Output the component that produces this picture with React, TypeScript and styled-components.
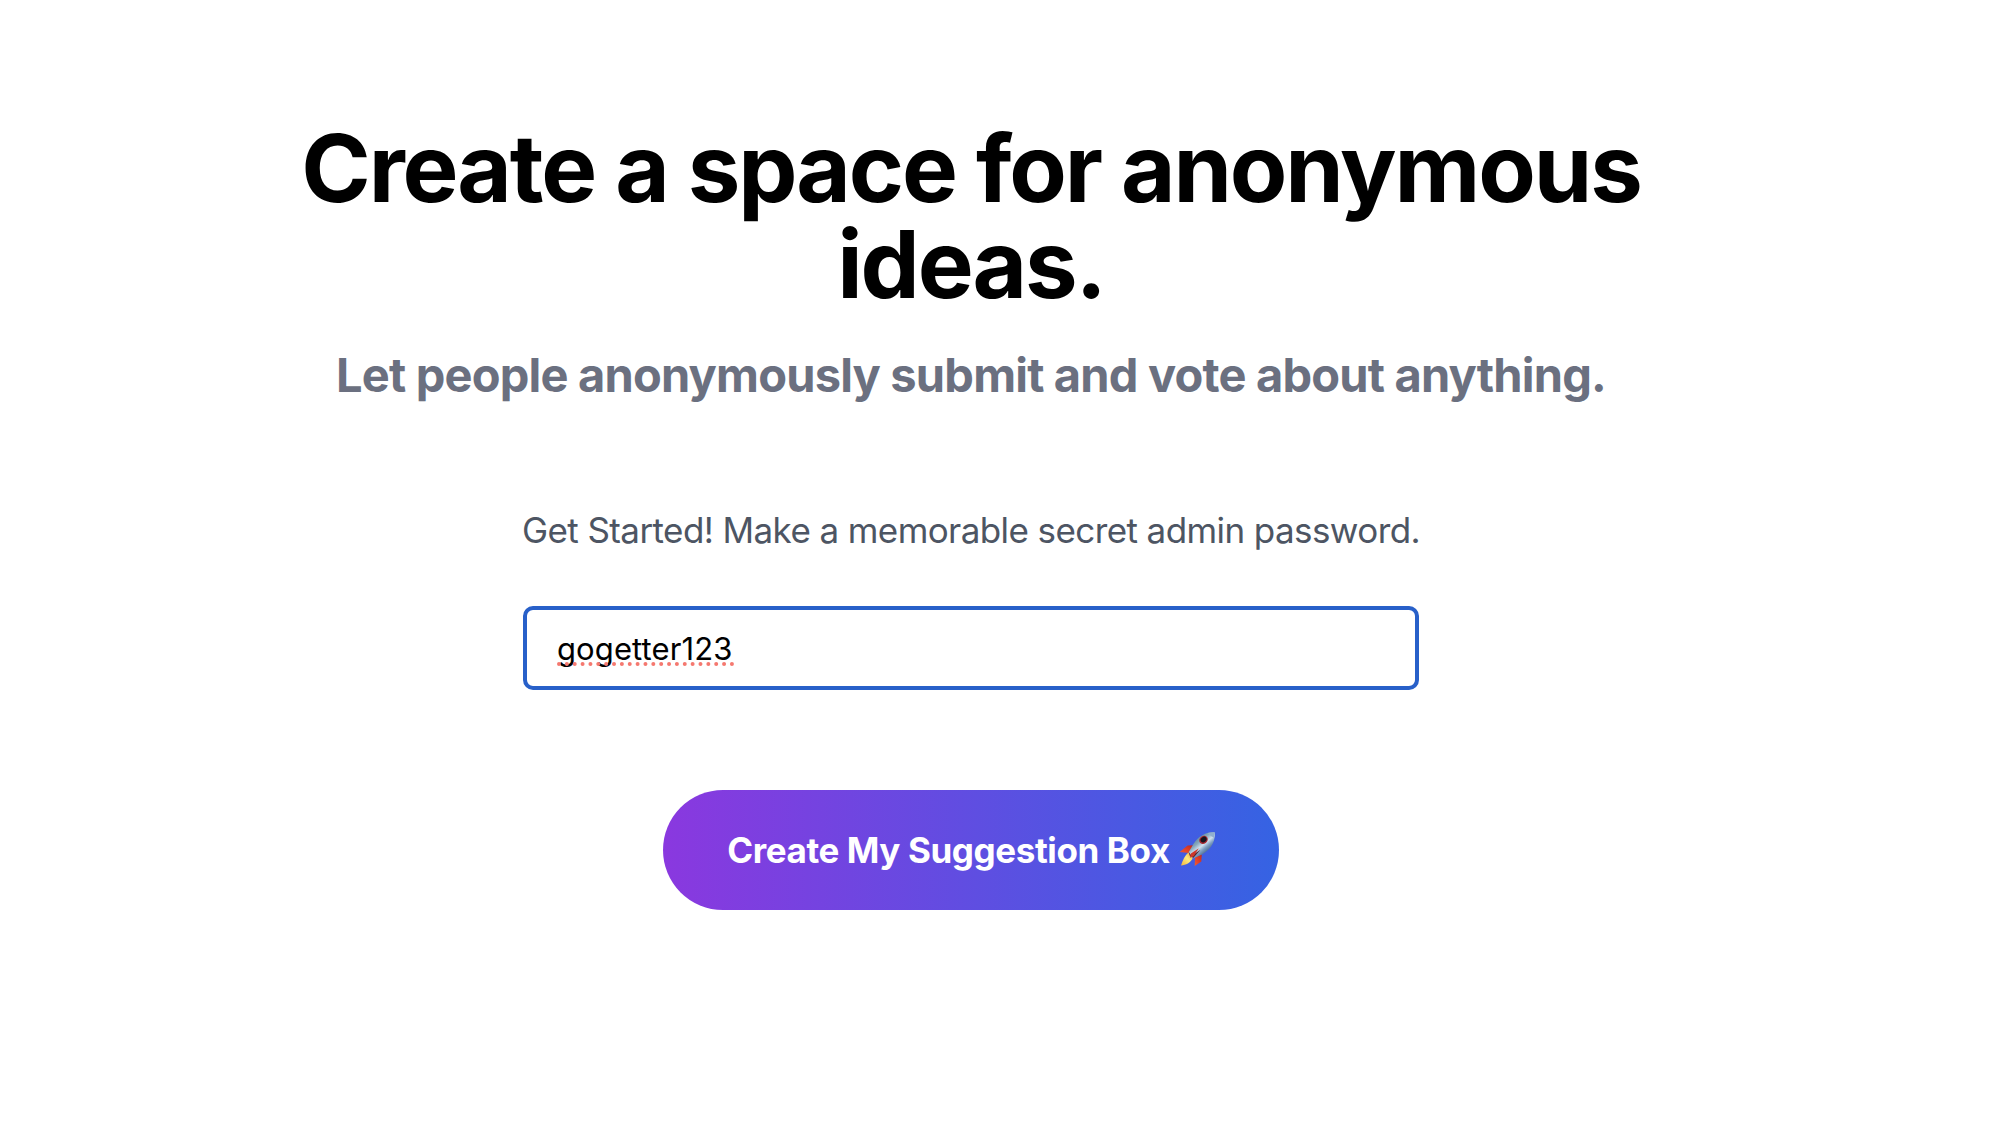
import { useState } from 'react'
import styled, { createGlobalStyle } from 'styled-components'

export default function App() {
	const [password, setPassword] = useState('gogetter123')

	return (
		<>
			<GlobalStyle />
			<PageWrapper>
				<Title>Create a space for anonymous ideas.</Title>
				<Subtitle>
					Let people anonymously submit and vote about anything.
				</Subtitle>

				{/* Password form */}
				<PasswordForm onSubmit={(e) => e.preventDefault()}>
					<PasswordLabel htmlFor="password">
						Get Started! Make a memorable secret admin password.
					</PasswordLabel>
					<InputWrapper>
						<PasswordInput
							id="password"
							spellCheck={false}
							value={password}
							onChange={(e) => setPassword(e.target.value)}
						/>
						<SpellingDots />
					</InputWrapper>
					<CreateButton type="submit">
						<span>Create My Suggestion Box</span>
						<Rocket />
					</CreateButton>
				</PasswordForm>
			</PageWrapper>
		</>
	)
}

function SpellingDots() {
	return (
		<DotsSvg width="178" height="4" viewBox="0 0 178 4" aria-hidden="true">
			<line
				x1="2"
				y1="2"
				x2="176"
				y2="2"
				stroke="#f5786f"
				strokeWidth="4"
				strokeLinecap="round"
				strokeDasharray="0 7.86"
			/>
		</DotsSvg>
	)
}

function Rocket() {
	return (
		<RocketSvg width="36" height="36" viewBox="0 0 36 36" aria-hidden="true">
			<defs>
				<linearGradient id="body" x1="0.25" y1="0.2" x2="0.75" y2="0.8">
					<stop offset="0" stopColor="#5d8296" />
					<stop offset="0.3" stopColor="#86a9bd" />
					<stop offset="0.52" stopColor="#cfe0ee" />
					<stop offset="0.7" stopColor="#7d9fc2" />
					<stop offset="1" stopColor="#37527f" />
				</linearGradient>
				<linearGradient id="flame" x1="1" y1="0" x2="0" y2="1">
					<stop offset="0" stopColor="#f0a63a" />
					<stop offset="0.45" stopColor="#fdeb7c" />
					<stop offset="1" stopColor="#f3b53c" />
				</linearGradient>
				<linearGradient id="fin" x1="1" y1="0" x2="0" y2="1">
					<stop offset="0" stopColor="#b8291f" />
					<stop offset="0.6" stopColor="#e5432a" />
					<stop offset="1" stopColor="#f0602f" />
				</linearGradient>
			</defs>
			<path d="M14.8 14.3 8.6 14.6.7 20.9l9.2 1z" fill="url(#fin)" />
			<path d="m22.8 23.2-.5 7.2-6.6 4.5.3-8.6z" fill="url(#fin)" />
			<path
				d="M9.4 21.6C5.8 24.4 3.9 29 2 34.6c5-.6 9.4-2.6 11.6-7z"
				fill="url(#flame)"
			/>
			<path
				d="M35.8 1.4C27.4.6 19.2 5.4 14.6 12.8L9.6 21.3l4.6 6.1 8.8-4C31 19.2 36.6 11.3 35.8 1.4z"
				fill="url(#body)"
			/>
			<path
				d="M35.8 1.4c-2.6-.2-5 .1-7.2.7 1.6 1.8 4.2 3.7 6.3 4.6.7-1.9 1-3.5.9-5.3z"
				fill="#91afce"
			/>
			<path d="m9.7 20.9 4.5 6.2 7.4-8.3-10.5 7z" fill="#5a2429" />
			<path d="m19.8 17.2-7.9 5.3-1 4.2 3.8-1.4z" fill="#cf3729" />
			<ellipse
				cx="24.5"
				cy="8.9"
				rx="4.5"
				ry="3.8"
				transform="rotate(-35 24.5 8.9)"
				fill="#a92830"
			/>
			<ellipse
				cx="24.6"
				cy="8.6"
				rx="3.2"
				ry="2.6"
				transform="rotate(-35 24.6 8.6)"
				fill="#16151e"
			/>
		</RocketSvg>
	)
}

const GlobalStyle = createGlobalStyle`
	* {
		box-sizing: border-box;
	}

	body {
		margin: 0;
		background: #ffffff;
		font-family: Inter, 'Liberation Sans', sans-serif;
	}
`

const PageWrapper = styled.main`
	display: flex;
	flex-direction: column;
	align-items: center;
	min-height: 100vh;
	padding: 120px 52px 0 0;
	text-align: center;
`

const Title = styled.h1`
	max-width: 1536px;
	margin: 0;
	color: #000000;
	font-size: 94px;
	font-weight: 700;
	line-height: 96px;
	letter-spacing: -2.13px;
`

const Subtitle = styled.h2`
	margin: 38px 0 0;
	color: #6b7080;
	font-size: 47px;
	font-weight: 700;
	line-height: 49px;
	letter-spacing: -0.81px;
`

const PasswordForm = styled.form`
	display: flex;
	flex-direction: column;
	align-items: center;
	margin-top: 111px;
`

const PasswordLabel = styled.label`
	color: #4d5563;
	font-size: 35px;
	line-height: 40px;
	letter-spacing: -0.59px;
	white-space: nowrap;
`

const InputWrapper = styled.div`
	position: relative;
	width: 896px;
	margin-top: 56px;
`

const PasswordInput = styled.input`
	display: block;
	width: 100%;
	height: 84px;
	padding: 0 30px;
	border: 4px solid #2860c9;
	border-radius: 10px;
	outline: none;
	background: #ffffff;
	color: #000000;
	font-family: inherit;
	font-size: 31px;
	letter-spacing: 0.1px;
`

// sits over the typed text, like the browser's own marker
const DotsSvg = styled.svg`
	position: absolute;
	left: 34px;
	bottom: 24px;
`

const CreateButton = styled.button`
	display: flex;
	align-items: center;
	justify-content: center;
	gap: 9px;
	width: 616px;
	height: 120px;
	margin-top: 100px;
	padding: 0;
	border: none;
	border-radius: 60px;
	background: linear-gradient(to right, #8a38df, #3563e3);
	color: #ffffff;
	font-family: inherit;
	font-size: 35px;
	font-weight: 650;
	line-height: 42px;
	letter-spacing: -0.4px;
	white-space: nowrap;
`

const RocketSvg = styled.svg`
	flex-shrink: 0;
	margin-top: -2px;
`
